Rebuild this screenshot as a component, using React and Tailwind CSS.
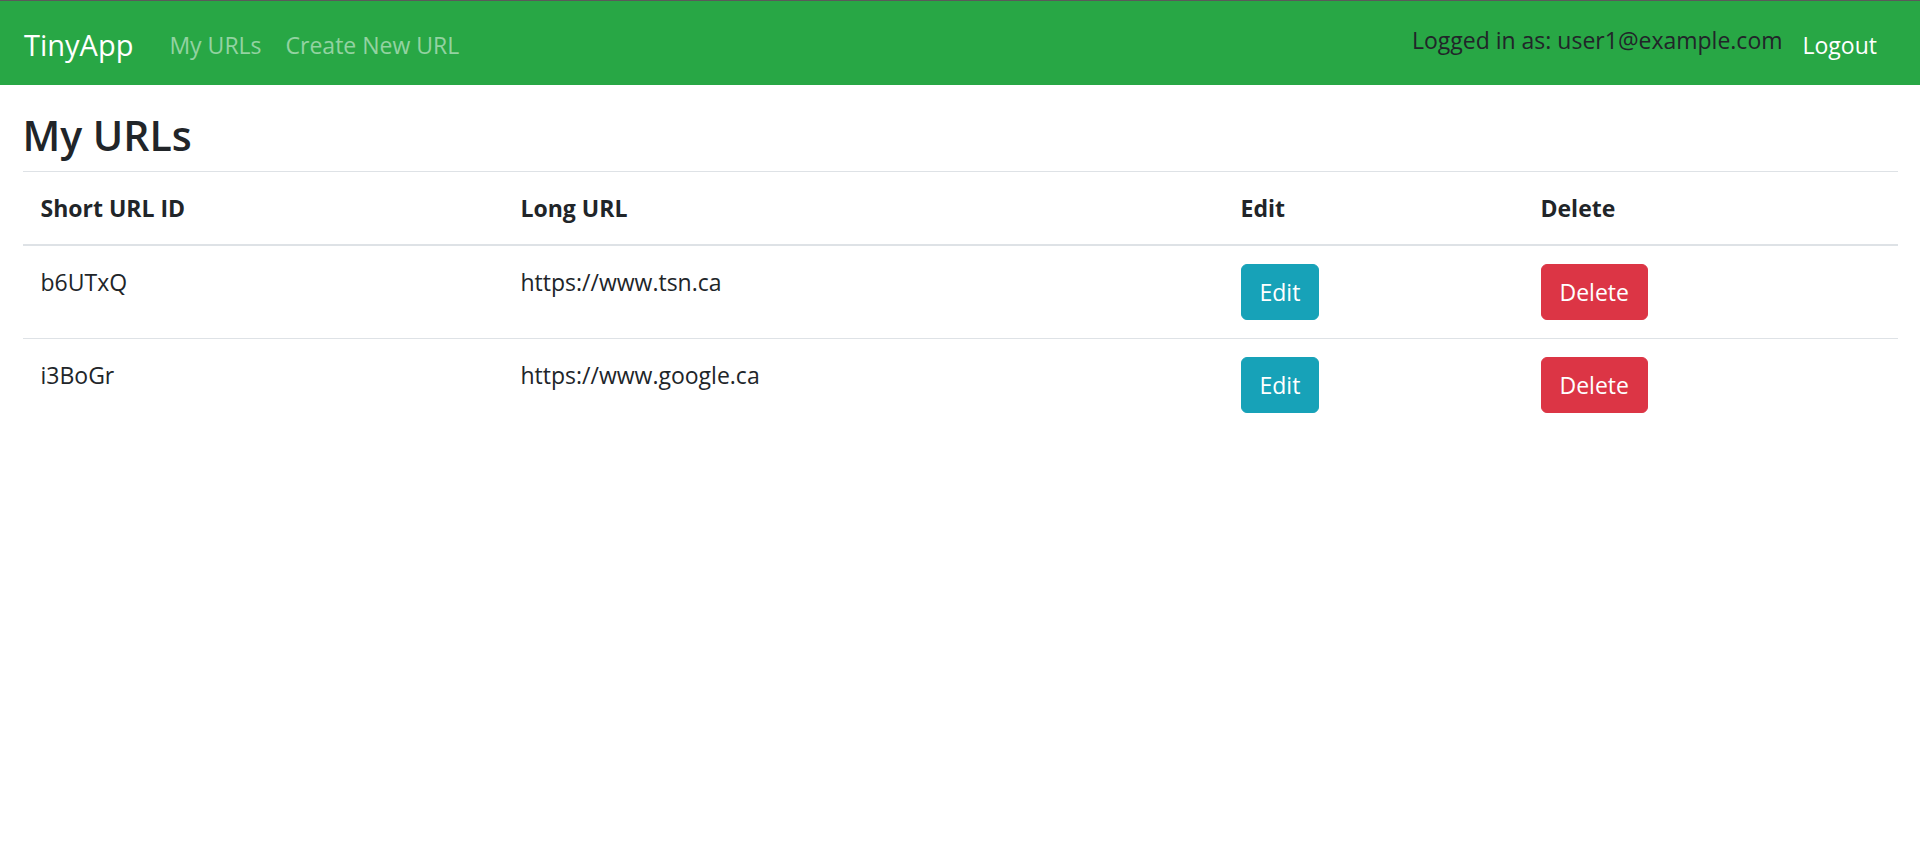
const urls = [
  { id: 'b6UTxQ', longURL: 'https://www.tsn.ca' },
  { id: 'i3BoGr', longURL: 'https://www.google.ca' },
]

function NavBar() {
  return (
    <nav className="flex h-[84px] items-center justify-between bg-[#28a745] pl-6 pr-[31px] pt-[3px]">
      <div className="flex items-center">
        <a href="#" className="mr-6 py-[7.5px] text-[29px] leading-[45px] text-white">
          TinyApp
        </a>
        <a href="#" className="px-3 py-3 text-[23px] leading-[36px] text-white/50">
          My URLs
        </a>
        <a href="#" className="px-3 py-3 text-[23px] leading-[36px] text-white/50">
          Create New URL
        </a>
      </div>
      <div className="flex items-center">
        <span className="mr-[8px] pb-[10px] text-[23px] leading-[36px] text-[#212529]">
          Logged in as: user1@example.com
        </span>
        <a href="#" className="px-3 py-3 text-[23px] leading-[36px] text-white">
          Logout
        </a>
      </div>
    </nav>
  )
}

function UrlRow({ url }) {
  return (
    <tr>
      <td className="border-t border-[#dee2e6] p-[18px] align-top">{url.id}</td>
      <td className="border-t border-[#dee2e6] p-[18px] align-top">{url.longURL}</td>
      <td className="border-t border-[#dee2e6] p-[18px] align-top">
        <button className="rounded-[6px] border border-[#17a2b8] bg-[#17a2b8] px-[18px] py-[9px] text-[23px] leading-[36px] text-white">
          Edit
        </button>
      </td>
      <td className="border-t border-[#dee2e6] p-[18px] align-top">
        <button className="rounded-[6px] border border-[#dc3545] bg-[#dc3545] px-[18px] py-[9px] text-[23px] leading-[36px] text-white">
          Delete
        </button>
      </td>
    </tr>
  )
}

export default function App() {
  return (
    <div className="min-h-[845px] border-t border-[#5a5a5a] bg-white font-['Open_Sans',sans-serif] text-[23px] leading-[36px] text-[#212529]">
      <NavBar />
      <main className="px-[22.5px]">
        <h3 className="mb-3 mt-6 pt-[2px] text-[41px] font-semibold leading-[48px]">My URLs</h3>
        <table className="w-full table-fixed border-collapse text-left">
          <thead>
            <tr>
              <th className="w-[480px] border-b-2 border-t border-[#dee2e6] p-[18px] align-bottom font-bold">Short URL ID</th>
              <th className="w-[720px] border-b-2 border-t border-[#dee2e6] p-[18px] align-bottom font-bold">Long URL</th>
              <th className="w-[300px] border-b-2 border-t border-[#dee2e6] p-[18px] align-bottom font-bold">Edit</th>
              <th className="border-b-2 border-t border-[#dee2e6] p-[18px] align-bottom font-bold">Delete</th>
            </tr>
          </thead>
          <tbody>
            {urls.map((url) => (
              <UrlRow key={url.id} url={url} />
            ))}
          </tbody>
        </table>
      </main>
    </div>
  )
}
